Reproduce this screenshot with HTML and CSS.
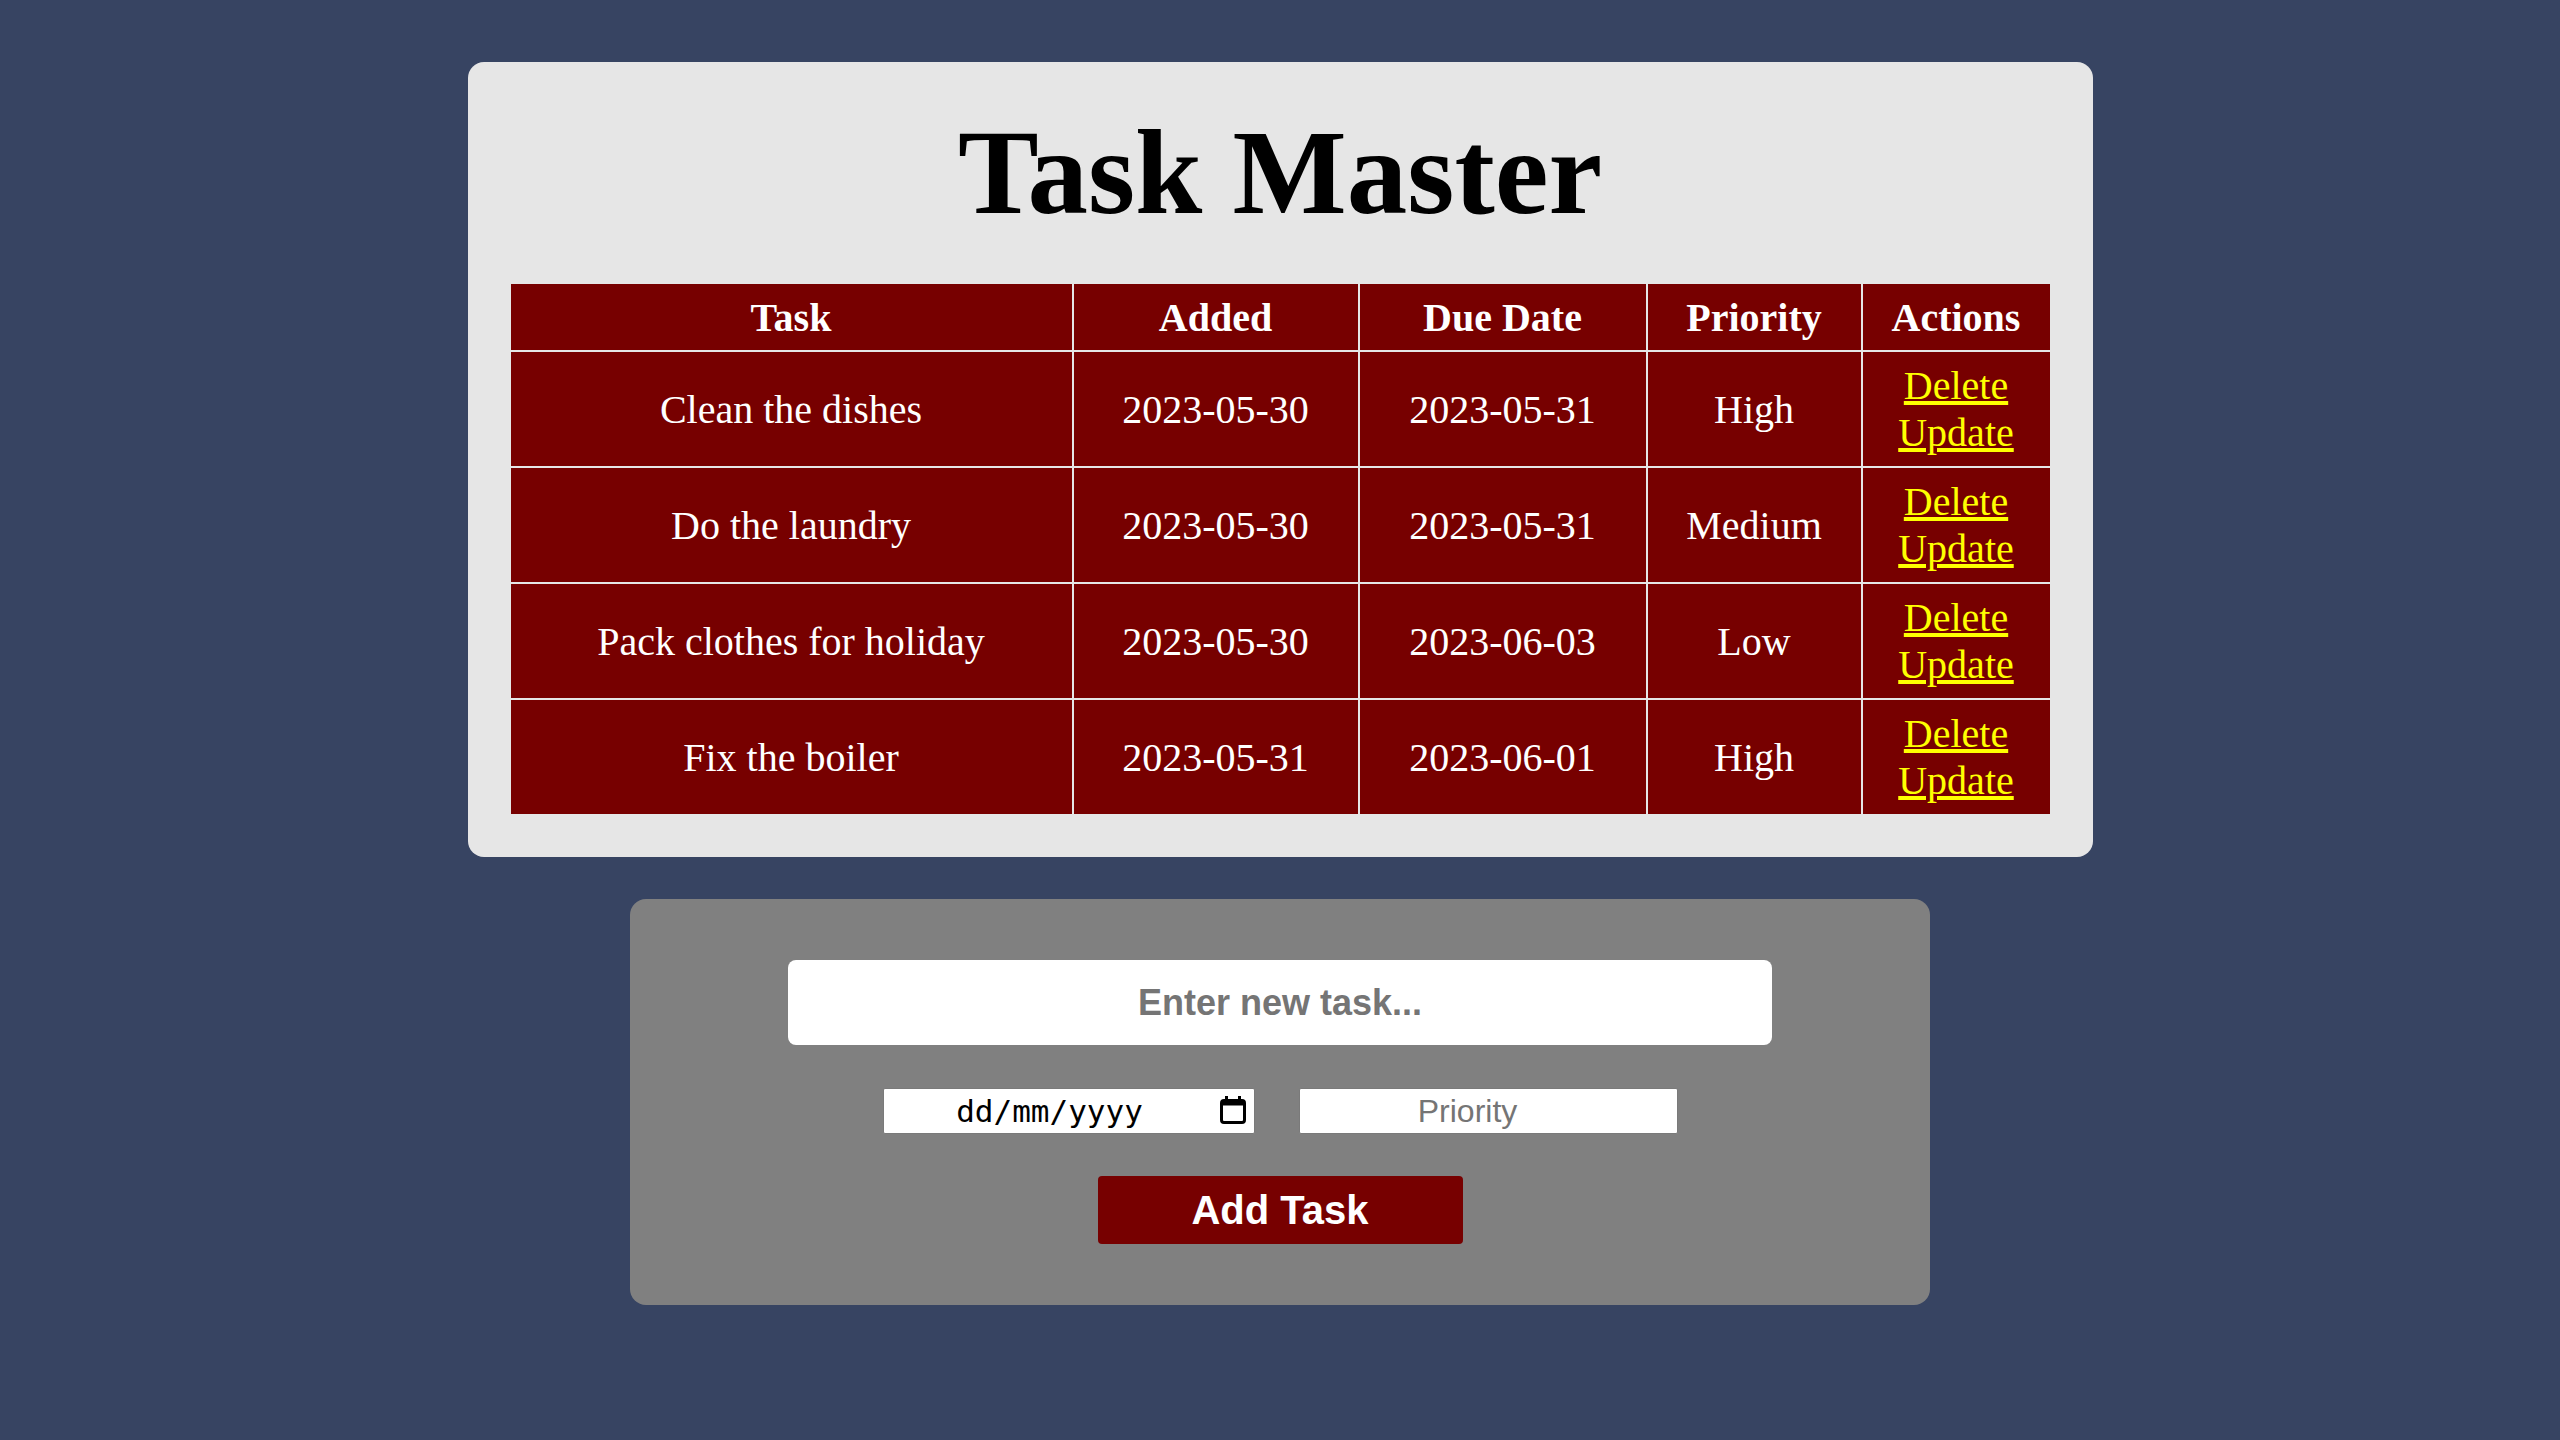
FILE: index.html
```html
<!DOCTYPE html>
<html lang="en">
<head>
<meta charset="utf-8">
<title>Task Master</title>
<link rel="stylesheet" href="styles.css">
</head>
<body>
<main class="page">
  <section class="card">
    <h1 class="title">Task Master</h1>
    <table class="tasks">
      <colgroup>
        <col class="c-task"><col class="c-added"><col class="c-due"><col class="c-prio"><col class="c-act">
      </colgroup>
      <thead>
        <tr><th>Task</th><th>Added</th><th>Due Date</th><th>Priority</th><th>Actions</th></tr>
      </thead>
      <tbody>
        <tr><td>Clean the dishes</td><td>2023-05-30</td><td>2023-05-31</td><td>High</td><td><a href="#">Delete</a><br><a href="#">Update</a></td></tr>
        <tr><td>Do the laundry</td><td>2023-05-30</td><td>2023-05-31</td><td>Medium</td><td><a href="#">Delete</a><br><a href="#">Update</a></td></tr>
        <tr><td>Pack clothes for holiday</td><td>2023-05-30</td><td>2023-06-03</td><td>Low</td><td><a href="#">Delete</a><br><a href="#">Update</a></td></tr>
        <tr><td>Fix the boiler</td><td>2023-05-31</td><td>2023-06-01</td><td>High</td><td><a href="#">Delete</a><br><a href="#">Update</a></td></tr>
      </tbody>
    </table>
  </section>
  <form class="add-form">
    <input class="task-input" type="text" placeholder="Enter new task...">
    <div class="row">
      <label class="date-input">
        <span class="date-text">dd/mm/yyyy</span>
        <svg class="cal-icon" width="26" height="28" viewBox="0 0 26 28" aria-hidden="true">
          <rect x="5" y="0" width="3" height="5" fill="#000"/>
          <rect x="18" y="0" width="3" height="5" fill="#000"/>
          <rect x="1.5" y="4.5" width="23" height="22" rx="2.5" fill="none" stroke="#000" stroke-width="3"/>
          <rect x="1.5" y="4.5" width="23" height="5" fill="#000"/>
        </svg>
      </label>
      <input class="prio-input" type="text" placeholder="Priority">
    </div>
    <button class="add-btn" type="button">Add Task</button>
  </form>
</main>
</body>
</html>
```

FILE: styles.css
```css
html, body {
  margin: 0;
  padding: 0;
}

body {
  background: #374462;
  font-family: "Liberation Serif", "Times New Roman", serif;
}

.page {
  display: flex;
  flex-direction: column;
  align-items: center;
  padding-top: 62px;
  gap: 42px;
}

.card {
  width: 1625px;
  box-sizing: border-box;
  background: #e6e6e6;
  border-radius: 16px;
  padding: 41px 41px 41px;
}

.title {
  margin: 0 0 40px;
  font-size: 121px;
  font-weight: bold;
  line-height: normal;
  text-align: center;
  color: #000;
}

.tasks {
  width: 1543px;
  table-layout: fixed;
  border-collapse: separate;
  border-spacing: 2px;
  font-size: 40px;
  color: #fff;
}

.c-task { width: 561px; }
.c-added { width: 284px; }
.c-due { width: 286px; }
.c-prio { width: 213px; }
.c-act { width: 187px; }

.tasks th,
.tasks td {
  background: #770000;
  text-align: center;
  vertical-align: middle;
  line-height: normal;
}

.tasks th {
  font-weight: bold;
  padding: 9.5px 10px;
}

.tasks td {
  font-weight: normal;
  padding: 10px 10px;
}

.tasks a {
  color: #ffff00;
  text-decoration: underline;
}

.add-form {
  width: 1300px;
  box-sizing: border-box;
  background: #808080;
  border-radius: 16px;
  padding: 61px 0;
  display: flex;
  flex-direction: column;
  align-items: center;
  margin: 0 0 40px;
}

.task-input {
  width: 984px;
  height: 85px;
  box-sizing: border-box;
  border: none;
  border-radius: 8px;
  background: #fff;
  padding: 0 10px;
  font-family: "Liberation Sans", Arial, sans-serif;
  font-weight: bold;
  font-size: 36px;
  text-align: center;
  color: #000;
}

.task-input::placeholder {
  color: #757575;
}

.row {
  display: flex;
  gap: 44px;
  margin: 43px 0 42px;
}

.date-input {
  width: 372px;
  height: 46px;
  box-sizing: border-box;
  display: flex;
  align-items: center;
  border: 1px solid #7a7a7a;
  border-radius: 2px;
  padding: 0 8px 0 2px;
  background: #fff;
  color: #000;
}

.date-text {
  flex: 1;
  text-align: center;
  font-family: monospace;
  font-size: 31px;
  line-height: 1;
  padding-right: 6px;
}

.cal-icon {
  flex: none;
  display: block;
  margin-bottom: 2px;
}

.prio-input {
  width: 379px;
  height: 46px;
  box-sizing: border-box;
  border: 1px solid #7a7a7a;
  border-radius: 2px;
  font-family: "Liberation Sans", Arial, sans-serif;
  font-size: 32px;
  text-align: center;
  padding: 1px 43px 1px 2px;
  background: #fff;
  color: #000;
}

.prio-input::placeholder {
  color: #757575;
}

.add-btn {
  width: 365px;
  height: 68px;
  box-sizing: border-box;
  border: none;
  border-radius: 4px;
  background: #770000;
  color: #fff;
  font-family: "Liberation Sans", Arial, sans-serif;
  font-weight: bold;
  font-size: 40px;
  padding: 0;
}
```
